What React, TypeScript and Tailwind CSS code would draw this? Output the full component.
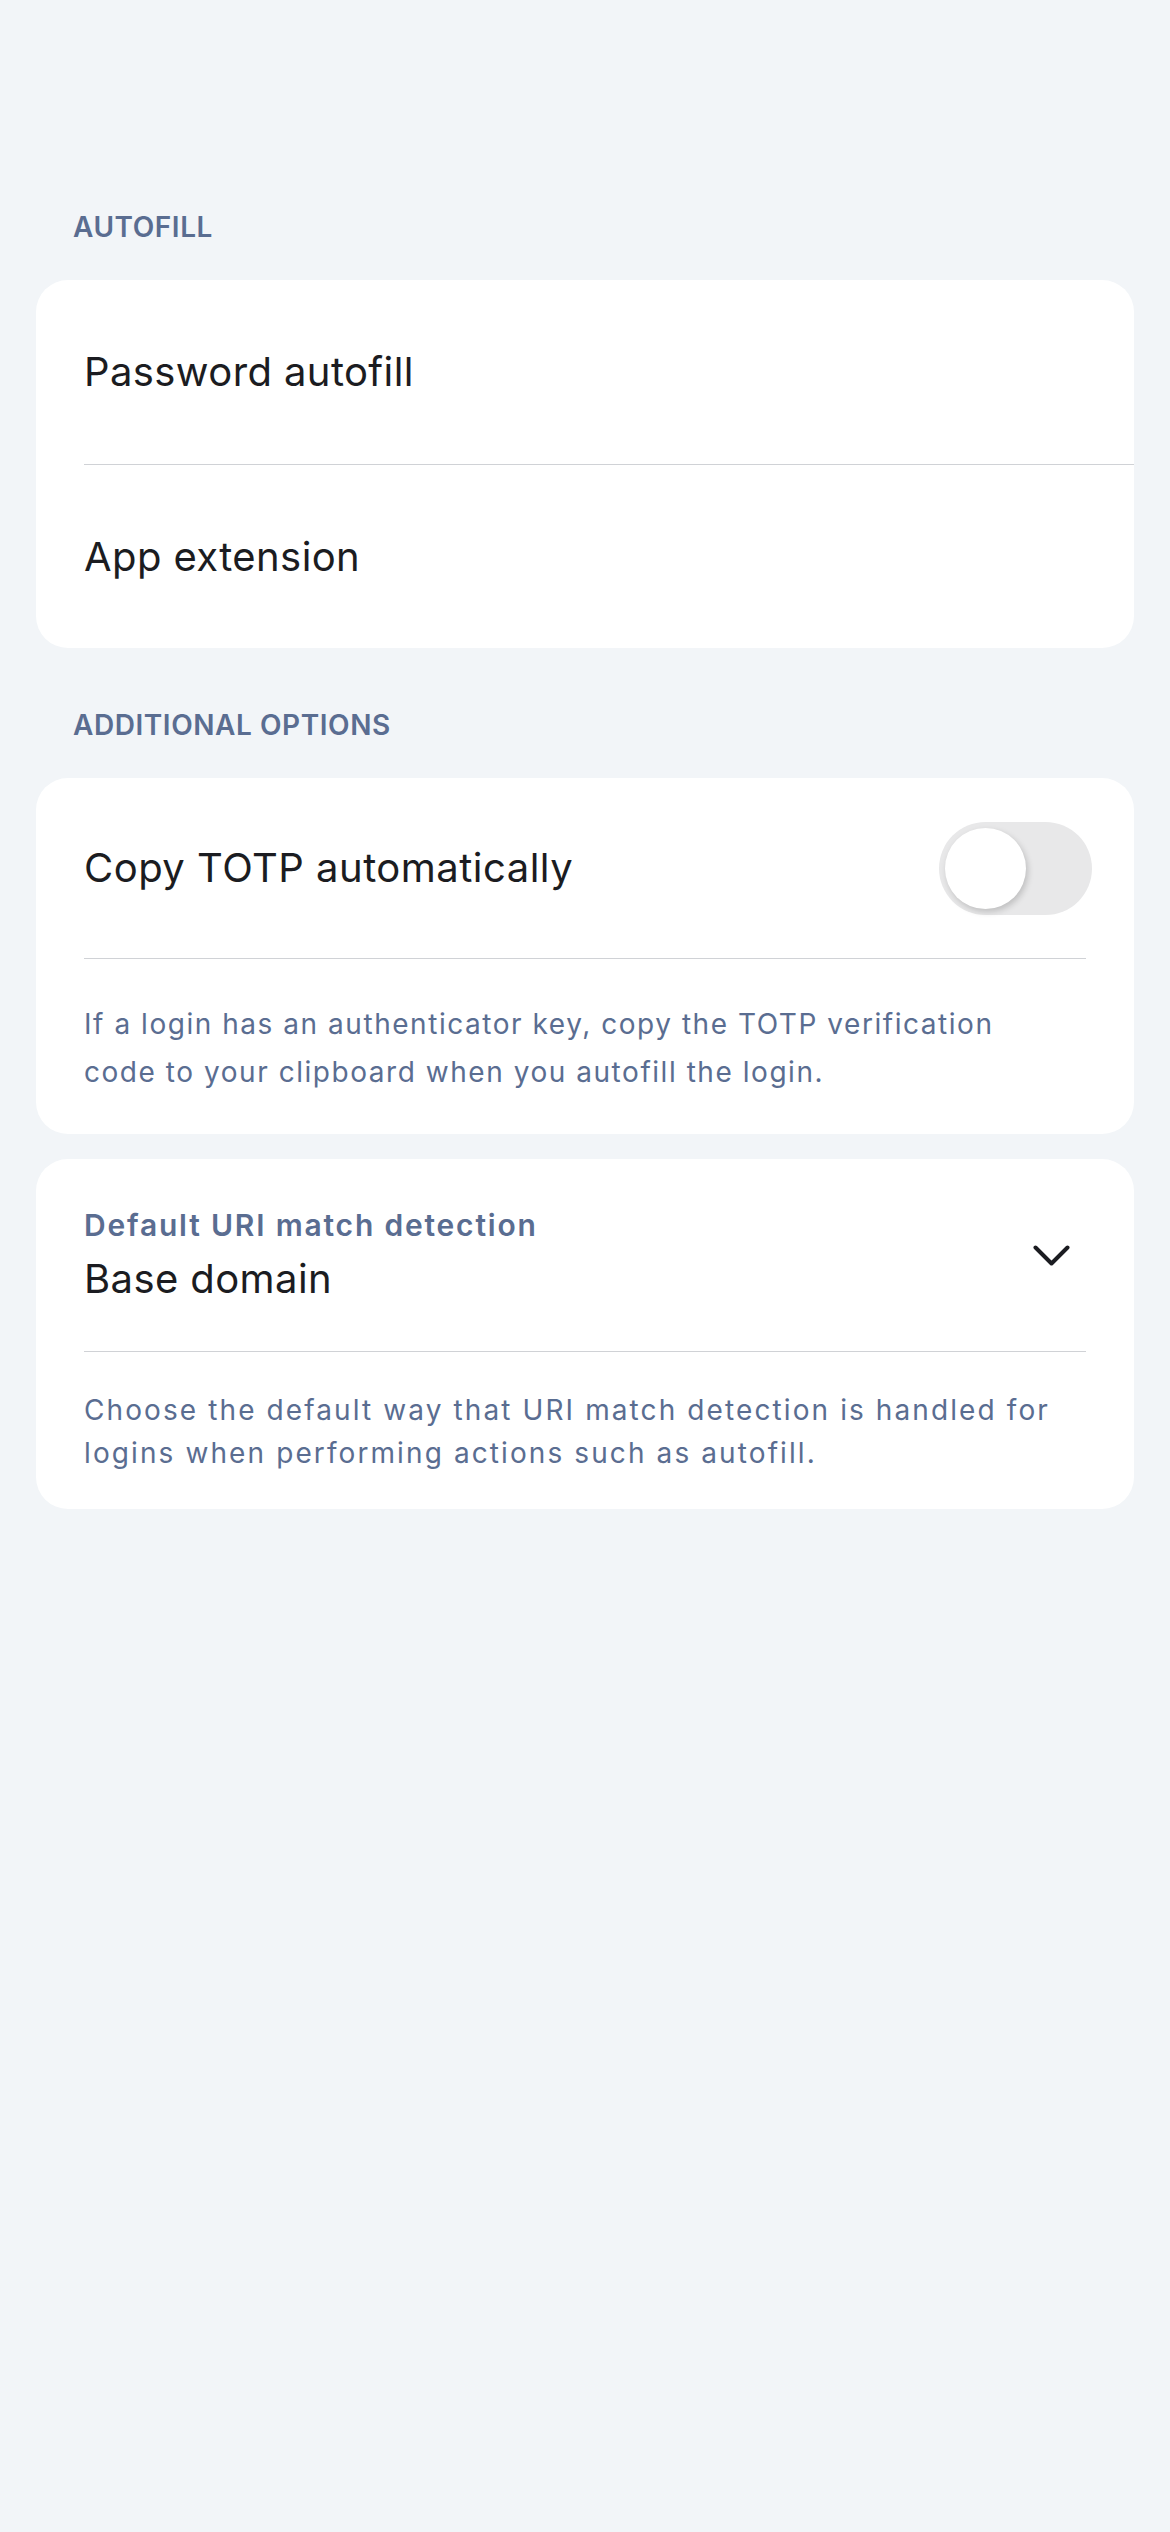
import React from 'react';

const font = { fontFamily: 'Inter, "Noto Sans", sans-serif' };

const SectionHeader = ({ children }: { children: React.ReactNode }) => (
    <div className="pl-[37px] text-[28px] leading-[34px] font-semibold tracking-[0.02em] text-[#5a6d91]">{children}</div>
);

const Toggle = () => (
    <div className="w-[153px] h-[93px] rounded-full bg-[#e8e8e9] flex items-center pl-[6px]">
        <div className="w-[81px] h-[81px] rounded-full bg-white shadow-[2px_3px_6px_rgba(0,0,0,0.18)]" />
    </div>
);

const App = () => {
    return (
        <div className="min-h-screen bg-[#f2f5f8] px-[36px] pt-[210px]" style={font}>
            <SectionHeader>AUTOFILL</SectionHeader>

            <div className="mt-[36px] rounded-[32px] bg-white overflow-hidden">
                <div className="h-[184px] flex items-center pl-[48px] text-[40px] tracking-[0.01em] text-[#1b1c21]">Password autofill</div>
                <div className="ml-[48px] h-px bg-[#d0d2d6]" />
                <div className="h-[183px] flex items-center pl-[48px] text-[40px] tracking-[0.01em] text-[#1b1c21]">App extension</div>
            </div>

            <div className="mt-[60px]">
                <SectionHeader>ADDITIONAL OPTIONS</SectionHeader>
            </div>

            <div className="mt-[36px] rounded-[32px] bg-white">
                <div className="h-[180px] flex items-center justify-between pl-[48px] pr-[42px]">
                    <span className="text-[40px] tracking-[0.012em] text-[#1b1c21]">Copy TOTP automatically</span>
                    <Toggle />
                </div>
                <div className="mx-[48px] h-px bg-[#d0d2d6]" />
                <p className="pl-[48px] pr-[70px] pt-[41px] pb-[38px] text-[28px] leading-[48px] tracking-[0.055em] text-[#5a6d91]">
                    If a login has an authenticator key, copy the TOTP verification code to your clipboard when you autofill the login.
                </p>
            </div>

            <div className="mt-[25px] rounded-[32px] bg-white">
                <div className="flex items-center justify-between pl-[48px] pr-[64px] pt-[48px] pb-[48px]">
                    <div className="flex flex-col gap-[12px]">
                        <span className="text-[30px] leading-[36px] font-semibold tracking-[0.06em] text-[#5a6d91]">Default URI match detection</span>
                        <span className="text-[40px] leading-[48px] tracking-[0.01em] text-[#1b1c21]">Base domain</span>
                    </div>
                    <svg width="37" height="21" viewBox="0 0 37 21" fill="none" stroke="#1b1c21" strokeWidth="4" strokeLinecap="round" strokeLinejoin="round">
                        <polyline points="2.5,2.5 18.5,18.5 34.5,2.5" />
                    </svg>
                </div>
                <div className="mx-[48px] h-px bg-[#d0d2d6]" />
                <p className="px-[48px] pt-[37px] pb-[34px] text-[28px] leading-[43px] tracking-[0.075em] text-[#5a6d91]">
                    Choose the default way that URI match detection is handled for logins when performing actions such as autofill.
                </p>
            </div>
        </div>
    );
};

export default App;
